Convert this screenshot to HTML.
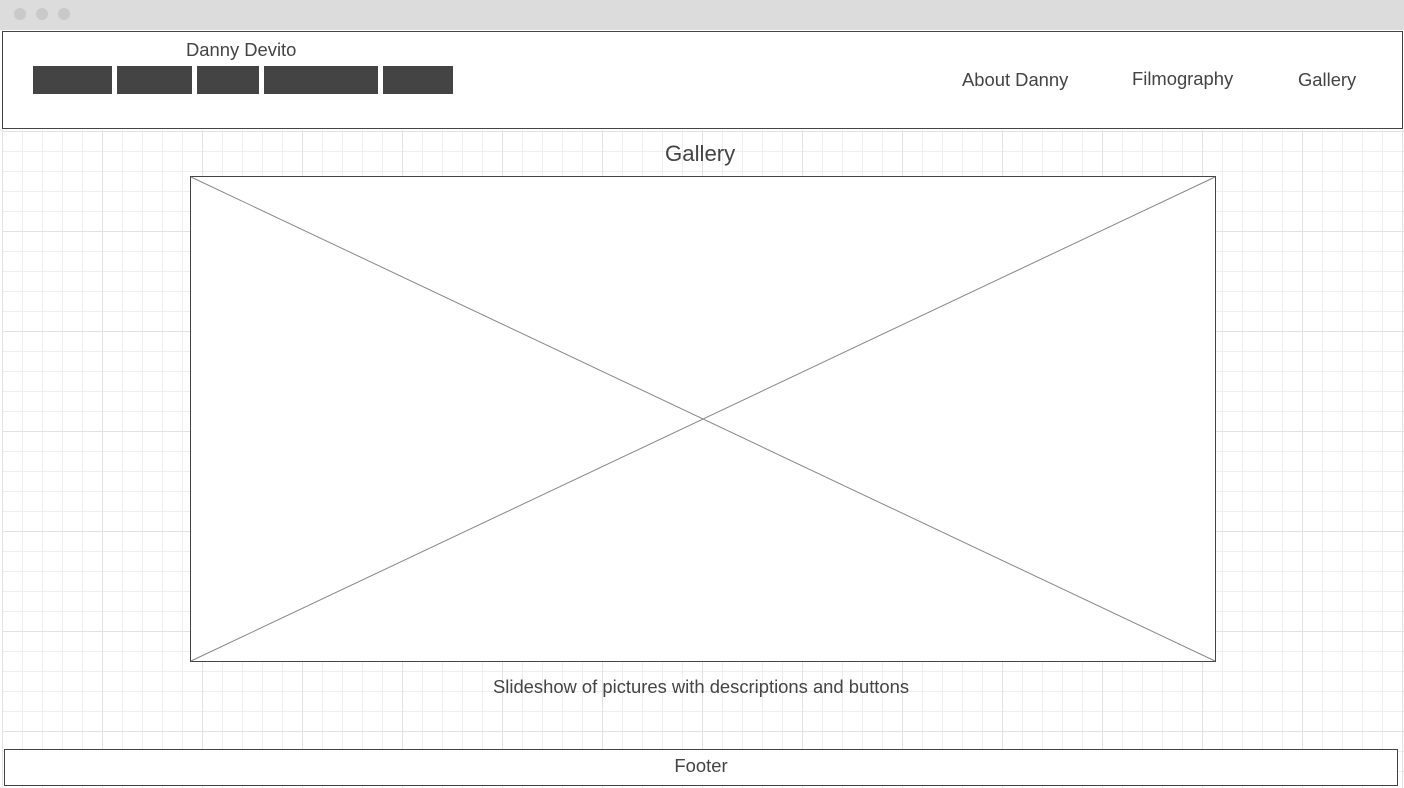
<!DOCTYPE html>
<html><head><meta charset="utf-8"><style>
body{margin:0;width:1404px;height:788px;position:relative;overflow:hidden;background:#fff;font-family:"Liberation Sans",sans-serif;color:#444}
.top{position:absolute;left:0;top:0;width:1404px;height:30px;background:#dcdcdc}
.dot{position:absolute;top:8px;width:12px;height:12px;border-radius:50%;background:#c9c9c9}
.grid{position:absolute;left:2px;top:130px;width:1402px;height:658px;
background-image:linear-gradient(#e2e2e2 1px,transparent 1px),linear-gradient(90deg,#e2e2e2 1px,transparent 1px),linear-gradient(#eeeeee 1px,transparent 1px),linear-gradient(90deg,#eeeeee 1px,transparent 1px);
background-size:100px 100px,100px 100px,20px 20px,20px 20px;background-position:0 1px,0 0,0 1px,0 0}
.hdr{position:absolute;left:2px;top:31px;width:1399px;height:96px;border:1px solid #444;background:#fff}
.b{position:absolute;top:66px;height:28px;background:#444}
.t{position:absolute;font-size:18.4px;white-space:nowrap}
.foot{position:absolute;left:4px;top:749px;width:1392px;height:35px;border:1px solid #444;background:#fff;text-align:center;line-height:32px;font-size:18.4px}
</style></head><body>
<div class="top"><div class="dot" style="left:14px"></div><div class="dot" style="left:36px"></div><div class="dot" style="left:58px"></div></div>
<div class="grid"></div>
<div class="hdr"></div>
<div class="t" style="left:186px;top:39px">Danny Devito</div>
<div class="b" style="left:33px;width:79px"></div>
<div class="b" style="left:117px;width:75px"></div>
<div class="b" style="left:197px;width:62px"></div>
<div class="b" style="left:264px;width:114px"></div>
<div class="b" style="left:383px;width:70px"></div>
<div class="t" style="left:962px;top:69px">About Danny</div>
<div class="t" style="left:1132px;top:68px">Filmography</div>
<div class="t" style="left:1298px;top:69px">Gallery</div>
<div class="t" style="left:665px;top:141px;font-size:22.2px">Gallery</div>
<svg style="position:absolute;left:190px;top:176px" width="1026" height="486"><rect x="0.5" y="0.5" width="1025" height="485" fill="#fff" stroke="#444"/><line x1="1" y1="1" x2="1025" y2="485" stroke="#888"/><line x1="1025" y1="1" x2="1" y2="485" stroke="#888"/></svg>
<div class="t" style="left:493px;top:676px">Slideshow of pictures with descriptions and buttons</div>
<div class="foot">Footer</div>
</body></html>
